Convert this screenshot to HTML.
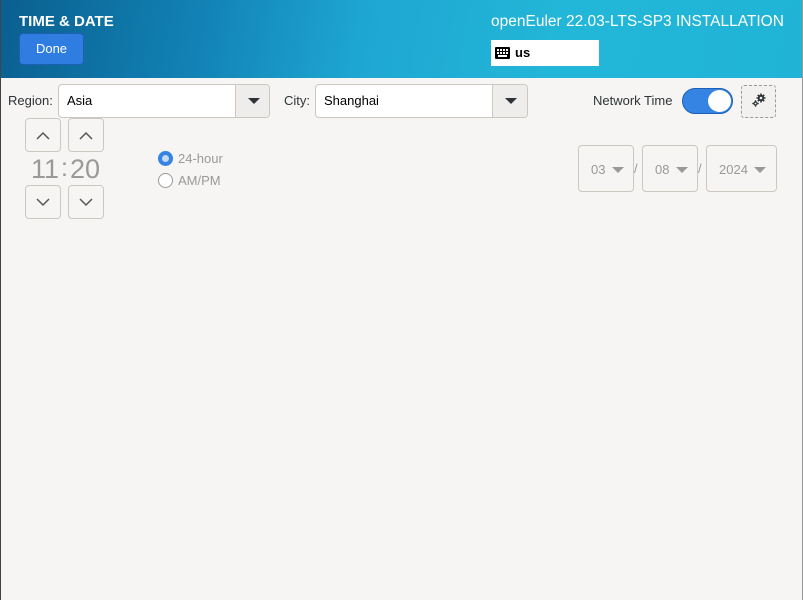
<!DOCTYPE html>
<html><head><style>
*{box-sizing:border-box;margin:0;padding:0}
body{width:803px;height:600px;overflow:hidden;background:#f6f5f4;font-family:"Liberation Sans","DejaVu Sans",sans-serif;position:relative}
.hdr{position:absolute;left:0;top:0;width:803px;height:78px;background:linear-gradient(100deg,#0a5f8f 0%,#1282b5 25%,#1ea6d2 45%,#22b7d8 70%,#20b3d6 100%)}
.t{position:absolute;color:#fff}
.box{position:absolute;background:#fff;border:1px solid #cdc7c2;border-radius:4px;overflow:hidden}
.btn{position:absolute;border:1px solid #cdc7c2;border-radius:4px;background:#f6f5f4}
.arr{position:absolute;width:0;height:0;border-left:6px solid transparent;border-right:6px solid transparent;border-top:6px solid #2e3436}
.lbl{position:absolute;font-size:13px;color:#2e3436}
.g{color:#999}
.dd{position:absolute;left:176px;top:0;width:36px;height:32px;border-left:1px solid #cdc7c2;background:#efedeb}
</style></head><body>
<div class="hdr"></div>
<div style="position:absolute;left:0;top:0;width:1px;height:600px;background:#444"></div>
<div style="position:absolute;right:0;top:0;width:1px;height:600px;background:#999"></div>
<div class="t" style="left:19px;top:13px;font-size:15px;font-weight:bold">TIME &amp; DATE</div>
<div style="position:absolute;left:19px;top:33px;width:65px;height:32px;background:#2f7de1;border:1px solid #1c5fb5;border-radius:4px;color:#fff;font-size:13px;text-align:center;line-height:30px">Done</div>
<div class="t" style="left:491px;top:13px;font-size:15.5px">openEuler 22.03-LTS-SP3 INSTALLATION</div>
<div style="position:absolute;left:491px;top:40px;width:108px;height:26px;background:#fff"></div>
<svg style="position:absolute;left:495px;top:47px" width="15" height="12"><rect width="15" height="12" rx="1" fill="#000"/><g fill="#fff"><rect x="2" y="2" width="2" height="2"/><rect x="5" y="2" width="2" height="2"/><rect x="8" y="2" width="2" height="2"/><rect x="11" y="2" width="2" height="2"/><rect x="2" y="5" width="2" height="2"/><rect x="5" y="5" width="2" height="2"/><rect x="8" y="5" width="2" height="2"/><rect x="11" y="5" width="2" height="2"/><rect x="3" y="8" width="9" height="2"/></g></svg>
<div style="position:absolute;left:515px;top:45px;font-size:13px;font-weight:bold">us</div>

<div class="lbl" style="left:8px;top:93px">Region:</div>
<div class="box" style="left:58px;top:84px;width:212px;height:34px"><span style="position:absolute;left:8px;top:8px;font-size:13px;color:#000">Asia</span><div class="dd"></div><div class="arr" style="left:189px;top:13px"></div></div>
<div class="lbl" style="left:284px;top:93px">City:</div>
<div class="box" style="left:315px;top:84px;width:213px;height:34px"><span style="position:absolute;left:8px;top:8px;font-size:13px;color:#000">Shanghai</span><div class="dd"></div><div class="arr" style="left:189px;top:13px"></div></div>

<div class="lbl" style="left:593px;top:93px">Network Time</div>
<div style="position:absolute;left:682px;top:88px;width:51px;height:26px;border-radius:13px;background:#3584e4;border:1px solid #1c5fb5"><div style="position:absolute;right:1px;top:1px;width:23px;height:22px;border-radius:50%;background:#fff"></div></div>
<div style="position:absolute;left:741px;top:85px;width:35px;height:33px;border:1px dashed #999;border-radius:3px;background:#f2f1f0"></div>
<svg style="position:absolute;left:751px;top:92px" width="16" height="16" viewBox="0 0 16 16"><g fill="#2e3436"><circle cx="10" cy="6" r="3.2"/><g stroke="#2e3436" stroke-width="1.6"><path d="M10 1.5v9M5.5 6h9M6.8 2.8l6.4 6.4M13.2 2.8l-6.4 6.4"/></g><circle cx="10" cy="6" r="1.3" fill="#f2f1f0"/><circle cx="4.5" cy="11.5" r="2.2"/><g stroke="#2e3436" stroke-width="1.2"><path d="M4.5 8.3v6.4M1.3 11.5h6.4"/></g><circle cx="4.5" cy="11.5" r="0.9" fill="#f2f1f0"/></g></svg>

<div class="btn" style="left:25px;top:118px;width:36px;height:34px"></div>
<div class="btn" style="left:68px;top:118px;width:36px;height:34px"></div>
<div class="btn" style="left:25px;top:185px;width:36px;height:34px"></div>
<div class="btn" style="left:68px;top:185px;width:36px;height:34px"></div>
<svg style="position:absolute;left:0;top:0" width="120" height="230"><g fill="none" stroke="#555" stroke-width="1.5"><path d="M37 139l6-6 6 6"/><path d="M80 139l6-6 6 6"/><path d="M37 199l6 6 6-6"/><path d="M80 199l6 6 6-6"/></g></svg>
<div style="position:absolute;left:31px;top:154px;font-size:27px;color:#999">11</div>
<div style="position:absolute;left:61px;top:154px;font-size:25px;color:#999">:</div>
<div style="position:absolute;left:70px;top:154px;font-size:27px;color:#999">20</div>

<div style="position:absolute;left:158px;top:151px;width:15px;height:15px;border-radius:50%;background:#3584e4"><div style="position:absolute;left:4px;top:4px;width:7px;height:7px;border-radius:50%;background:#c5d9f5"></div></div>
<div class="lbl g" style="left:178px;top:151px">24-hour</div>
<div style="position:absolute;left:158px;top:173px;width:15px;height:15px;border-radius:50%;background:#fff;border:1px solid #999"></div>
<div class="lbl g" style="left:178px;top:173px">AM/PM</div>

<div class="btn" style="left:578px;top:145px;width:56px;height:47px"><span class="g" style="position:absolute;left:12px;top:16px;font-size:13px">03</span><div class="arr" style="left:33px;top:21px;border-top-color:#999"></div></div>
<div class="lbl g" style="left:634px;top:161px">/</div>
<div class="btn" style="left:642px;top:145px;width:56px;height:47px"><span class="g" style="position:absolute;left:12px;top:16px;font-size:13px">08</span><div class="arr" style="left:33px;top:21px;border-top-color:#999"></div></div>
<div class="lbl g" style="left:698px;top:161px">/</div>
<div class="btn" style="left:706px;top:145px;width:71px;height:47px"><span class="g" style="position:absolute;left:12px;top:16px;font-size:13px">2024</span><div class="arr" style="left:47px;top:21px;border-top-color:#999"></div></div>
</body></html>
